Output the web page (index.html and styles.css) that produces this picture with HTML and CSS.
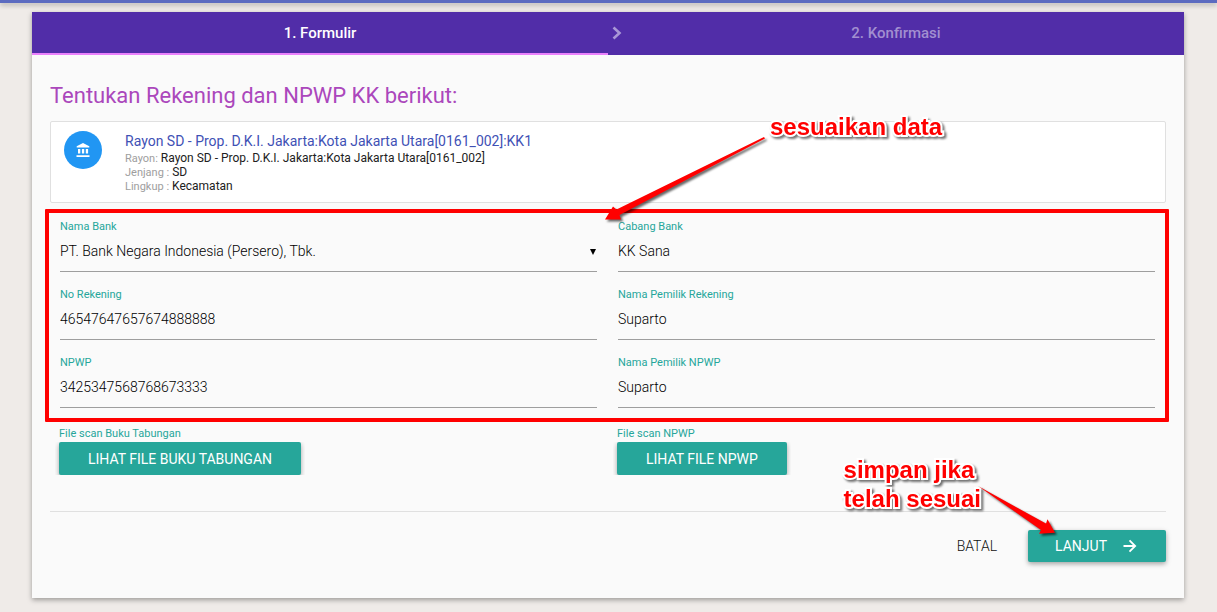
FILE: index.html
```html
<!DOCTYPE html>
<html lang="id">
<head>
<meta charset="utf-8">
<title>Formulir Rekening dan NPWP</title>
<link rel="stylesheet" href="styles.css">
</head>
<body>
<header class="topbar"></header>
<main class="card">
  <nav class="steps">
    <button type="button" class="step step-active">1. Formulir</button>
    <svg class="steps-chevron" width="12" height="16" viewBox="0 0 12 16" aria-hidden="true"><path d="M2.500 2.500L8.500 8L2.500 13.500" fill="none" stroke="#a997d6" stroke-width="2.600"/></svg>
    <button type="button" class="step">2. Konfirmasi</button>
  </nav>
  <form class="content">
    <h1 class="title">Tentukan Rekening dan NPWP KK berikut:</h1>
    <section class="info">
      <span class="avatar">
        <svg width="14" height="15" viewBox="0 0 14 15" aria-hidden="true"><path fill="#fff" d="M7 0L13.300 3.200V4.500H.7V3.200ZM2 6h2.300v4.500H2ZM5.900 6h2.300v4.500H5.900ZM9.800 6h2.300v4.500H9.800ZM.5 12.200h13v1.900H.5Z"/></svg>
      </span>
      <div class="info-text">
        <h2 class="info-name">Rayon SD - Prop. D.K.I. Jakarta:Kota Jakarta Utara[0161_002]:KK1</h2>
        <p class="info-line"><span class="info-key">Rayon:</span> Rayon SD - Prop. D.K.I. Jakarta:Kota Jakarta Utara[0161_002]</p>
        <p class="info-line"><span class="info-key">Jenjang :</span> SD</p>
        <p class="info-line"><span class="info-key">Lingkup :</span> Kecamatan</p>
      </div>
    </section>
    <section class="fields">
      <div class="field">
        <label class="label" for="bank">Nama Bank</label>
        <div class="select-wrap">
          <select class="control" id="bank"><option>PT. Bank Negara Indonesia (Persero), Tbk.</option></select>
        </div>
      </div>
      <div class="field">
        <label class="label" for="cabang">Cabang Bank</label>
        <input class="control" id="cabang" type="text" value="KK Sana">
      </div>
      <div class="field">
        <label class="label" for="rekening">No Rekening</label>
        <input class="control" id="rekening" type="text" value="46547647657674888888">
      </div>
      <div class="field">
        <label class="label" for="pemilik-rekening">Nama Pemilik Rekening</label>
        <input class="control" id="pemilik-rekening" type="text" value="Suparto">
      </div>
      <div class="field">
        <label class="label" for="npwp">NPWP</label>
        <input class="control" id="npwp" type="text" value="3425347568768673333">
      </div>
      <div class="field">
        <label class="label" for="pemilik-npwp">Nama Pemilik NPWP</label>
        <input class="control" id="pemilik-npwp" type="text" value="Suparto">
      </div>
      <div class="highlight"></div>
      <div class="note note-data">sesuaikan data</div>
      <svg class="arrow arrow-data" width="170" height="100" viewBox="600 130 170 100" aria-hidden="true"><path fill="#f00" d="M764 137L765 138.500L619.500 215L621 219.500L605 219.500L613 206.500L616.500 209.500Z"/></svg>
    </section>
    <section class="files">
      <div class="file">
        <label class="label" for="file-tabungan">File scan Buku Tabungan</label>
        <button type="button" class="btn btn-file" id="file-tabungan">LIHAT FILE BUKU TABUNGAN</button>
      </div>
      <div class="file">
        <label class="label" for="file-npwp">File scan NPWP</label>
        <button type="button" class="btn btn-file" id="file-npwp">LIHAT FILE NPWP</button>
      </div>
    </section>
    <footer class="actions">
      <button type="button" class="btn-flat">BATAL</button>
      <button type="submit" class="btn btn-next">LANJUT
        <svg width="14" height="14" viewBox="0 0 14 14" aria-hidden="true"><path d="M.5 7H12M6.500 1.300L12.200 7L6.500 12.700" fill="none" stroke="#fff" stroke-width="1.800"/></svg>
      </button>
      <div class="note note-save">simpan jika<br>telah sesuai</div>
      <svg class="arrow arrow-save" width="90" height="60" viewBox="970 480 90 60" aria-hidden="true"><path fill="#f00" d="M978 486L1046 523.500L1047.500 519.300L1055 532.700L1039 533.700L1041 530Z"/></svg>
    </footer>
  </form>
</main>
</body>
</html>
```

FILE: styles.css
```css
* { box-sizing: border-box; }

body {
  margin: 0;
  min-height: 100vh;
  background: #efebe8;
  color: #212121;
  font-family: Roboto, "Liberation Sans", sans-serif;
  font-size: 14px;
}

button, input, select { font: inherit; }
button { cursor: pointer; }

.topbar {
  height: 3px;
  background: #5c6bc0;
  box-shadow: 0 2px 5px rgba(0, 0, 0, .3);
}

.card {
  margin: 9px 33px 14px 32px;
  background: #fafafa;
  box-shadow: 0 2px 5px rgba(0, 0, 0, .35);
}

.steps {
  display: grid;
  grid-template-columns: 1fr 1fr;
  position: relative;
  background: #512da8;
}

.step {
  height: 43px;
  padding: 0;
  border: 0;
  border-bottom: 2px solid transparent;
  background: none;
  color: #a28fd0;
  font-size: 15px;
  font-weight: 500;
}

.step-active {
  border-bottom-color: #ea80fc;
  color: #fff;
}

.steps-chevron {
  position: absolute;
  top: 13px;
  left: calc(50% + 3px);
}

.content { padding: 28px 18px 36px; }

.title {
  margin: 0 0 12px;
  color: #ab47bc;
  font-size: 22px;
  font-weight: 400;
  line-height: 26px;
}

.info {
  display: flex;
  align-items: flex-start;
  gap: 23px;
  padding: 9px 13px 9px;
  border: 1px solid #e0e0e0;
  border-radius: 2px;
  background: #fff;
}

.avatar {
  display: flex;
  align-items: center;
  justify-content: center;
  flex: none;
  width: 38px;
  height: 38px;
  border-radius: 50%;
  background: #2196f3;
}

.info-name {
  margin: 0;
  color: #3f51b5;
  font-size: 14px;
  font-weight: 400;
  line-height: 20px;
}

.info-line {
  margin: 0;
  font-size: 12px;
  line-height: 14px;
}

.info-key {
  color: #9e9e9e;
  font-size: 11px;
  line-height: 1;
}

.fields {
  display: grid;
  grid-template-columns: 1fr 1fr;
  column-gap: 21px;
  position: relative;
  padding: 1px 11px 0 10px;
}

.field { padding-top: 15px; }

.label {
  display: block;
  color: #26a69a;
  font-size: 11px;
  line-height: 16px;
}

.control {
  display: block;
  width: 100%;
  height: 37px;
  padding: 0 0 5px;
  border: 0;
  border-bottom: 1px solid #9e9e9e;
  border-radius: 0;
  outline: 0;
  background: none;
  color: #000;
  font-weight: 300;
  appearance: none;
}

.select-wrap { position: relative; }

.select-wrap::after {
  content: "";
  position: absolute;
  top: 14px;
  right: 1px;
  border: 3px solid transparent;
  border-top: 6px solid #000;
  border-bottom: 0;
  pointer-events: none;
}

.highlight {
  position: absolute;
  inset: 6px -3px -14px -5px;
  border: 4px solid #f00;
  border-radius: 1px;
  pointer-events: none;
}

.note {
  position: absolute;
  color: #f00;
  font: bold 24px/29px "Liberation Sans", sans-serif;
  white-space: nowrap;
  paint-order: stroke fill;
  -webkit-text-stroke: 4px #fff;
  filter: drop-shadow(2px 2px 1px rgba(0, 0, 0, .55));
}

.note-data {
  top: -91px;
  left: calc(50% + 162px);
}

.arrow {
  position: absolute;
  filter: drop-shadow(2px 2px 1px rgba(0, 0, 0, .6));
  pointer-events: none;
}

.arrow-data {
  top: -73px;
  left: calc(50% - 8px);
}

.files {
  display: grid;
  grid-template-columns: 1fr 1fr;
  padding: 18px 0 36px;
}

.file { padding-left: 9px; }

.btn {
  height: 32px;
  padding: 0 27px;
  border: 0;
  border-radius: 2px;
  background: #26a69a;
  box-shadow: 0 2px 5px rgba(0, 0, 0, .35);
  color: #fff;
}

.btn-file {
  height: 33px;
  padding: 0 29px;
  clip-path: inset(0 -4px);
}

.actions {
  display: flex;
  justify-content: flex-end;
  gap: 31px;
  position: relative;
  padding-top: 18px;
  border-top: 1px solid #e0e0e0;
}

.btn-flat {
  padding: 0;
  border: 0;
  background: none;
  color: #111;
  font-weight: 300;
}

.btn-next {
  display: flex;
  align-items: center;
  gap: 16px;
  padding-right: 29px;
}

.note-save {
  right: 185px;
  bottom: 49px;
}

.arrow-save {
  top: -32px;
  right: 106px;
}
```
